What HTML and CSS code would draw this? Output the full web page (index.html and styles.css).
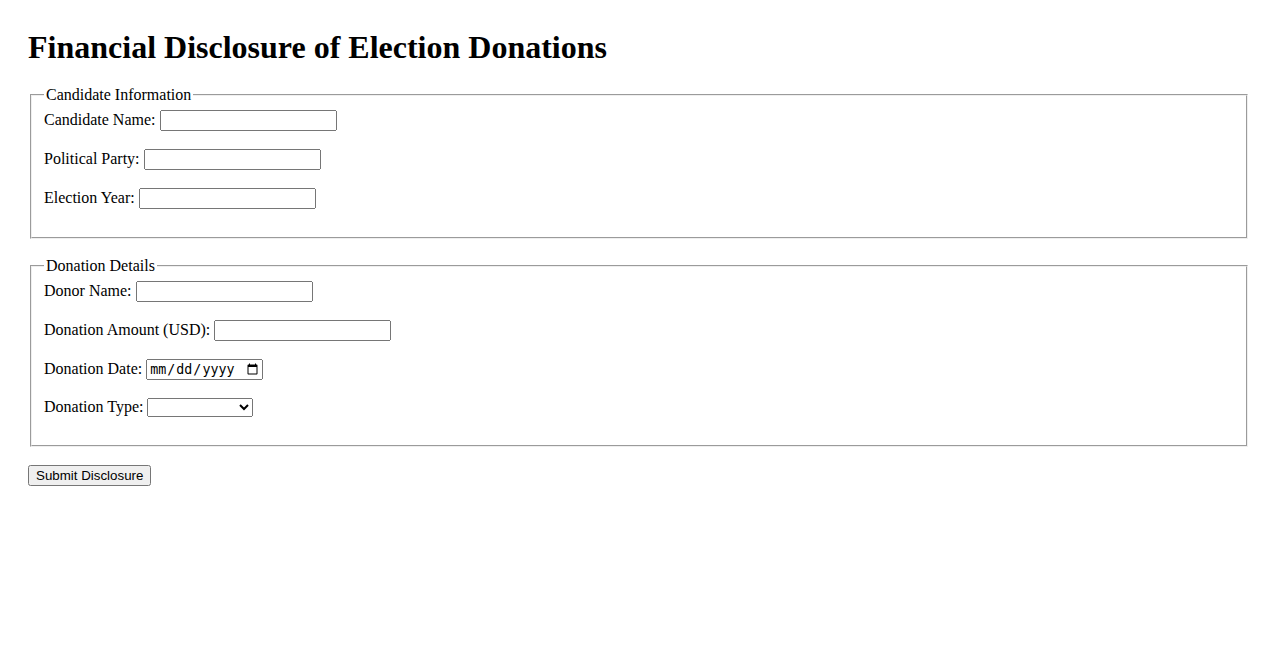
FILE: index.html
```html
<!DOCTYPE html>
<html lang="en">
<head>
<meta charset="utf-8">
<title>Financial Disclosure of Election Donations</title>
<link rel="stylesheet" href="styles.css">
</head>
<body>
<h1 class="title">Financial Disclosure of Election Donations</h1>
<form class="form">
  <fieldset class="group">
    <legend>Candidate Information</legend>
    <div class="row"><label for="cname">Candidate Name:</label> <input class="field" type="text" id="cname"></div>
    <div class="row"><label for="party">Political Party:</label> <input class="field" type="text" id="party"></div>
    <div class="row"><label for="year">Election Year:</label> <input class="field" type="text" id="year"></div>
  </fieldset>
  <fieldset class="group">
    <legend>Donation Details</legend>
    <div class="row"><label for="donor">Donor Name:</label> <input class="field" type="text" id="donor"></div>
    <div class="row"><label for="amount">Donation Amount (USD):</label> <input class="field" type="text" id="amount"></div>
    <div class="row"><label for="date">Donation Date:</label> <input class="date-field" type="date" id="date"></div>
    <div class="row"><label for="type">Donation Type:</label> <select id="type" class="type-select"><option value=""></option><option>Individual</option><option>Corporate</option><option>PAC</option></select></div>
  </fieldset>
  <button type="submit" class="submit">Submit Disclosure</button>
</form>
</body>
</html>
```

FILE: styles.css
```css
body {
  margin: 0;
  padding: 28px;
  font-family: "Liberation Serif", "Times New Roman", serif;
  font-size: 16px;
  color: #000;
  background: #fff;
}

.title {
  margin: 1px 0 20.44px;
  font-size: 32px;
  font-weight: bold;
}

.form {
  margin: 0;
}

.group {
  margin: 0 2px 18px;
}

.row {
  margin-bottom: 18px;
}

.field {
  box-sizing: border-box;
  width: 177px;
}

.date-field {
  box-sizing: border-box;
  width: 117px;
}

.type-select {
  width: 106px;
}
```
